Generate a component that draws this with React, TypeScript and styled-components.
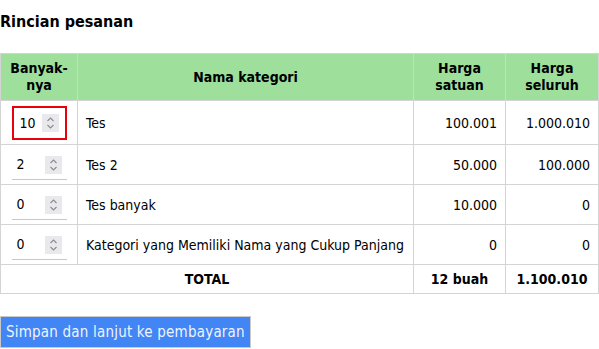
import styled, { createGlobalStyle } from "styled-components";

const GlobalStyle = createGlobalStyle`
  body {
    margin: 0;
    font-family: "DejaVu Sans Condensed", "DejaVu Sans", Verdana, sans-serif;
    font-stretch: condensed;
    color: #000;
    background: #fff;
  }
`;

const Page = styled.div`
  display: flex;
  flex-direction: column;
  align-items: flex-start;
  padding-top: 12px;
`;

const Title = styled.h2`
  margin: 0 0 22px;
  font-size: 16px;
  font-weight: bold;
`;

const Table = styled.table`
  width: 598px;
  table-layout: fixed;
  border-collapse: collapse;
  font-size: 14px;
  margin-bottom: 22px;
`;

const Th = styled.th`
  background: #9ddf9b;
  border: 1px solid #d4d4d4;
  padding: 6px 8px;
  font-weight: bold;
  text-align: center;
  line-height: 17px;
`;

const Td = styled.td<{ align?: "left" | "right" | "center"; bold?: boolean }>`
  border: 1px solid #d4d4d4;
  padding: 5px 8px 4px;
  line-height: ${({ bold }) => (bold ? "19px" : "17px")};
  text-align: ${({ align }) => align || "left"};
  font-weight: ${({ bold }) => (bold ? "bold" : "normal")};
`;

const QtyBox = styled.div<{ active?: boolean }>`
  box-sizing: border-box;
  width: 55px;
  height: ${({ active }) => (active ? "34px" : "30px")};
  margin: 0 auto;
  display: flex;
  align-items: center;
  justify-content: space-between;
  padding: 0 ${({ active }) => (active ? "6px" : "5px")} 0
    ${({ active }) => (active ? "6px" : "5px")};
  border: ${({ active }) => (active ? "2px solid #e8000b" : "none")};
  border-bottom: ${({ active }) =>
    active ? "2px solid #e8000b" : "1px solid #c8c8c8"};
`;

const Spinner = styled.span`
  display: flex;
  align-items: center;
  justify-content: center;
  width: 17px;
  height: 18px;
  background: #e9e9ed;
`;

const Button = styled.button`
  font-family: "DejaVu Sans Condensed", "DejaVu Sans", Verdana, sans-serif;
  font-stretch: condensed;
  font-size: 15px;
  letter-spacing: 0.2px;
  height: 32px;
  padding: 0 5px;
  background: #4285f4;
  color: #eef4ff;
  border: 1px solid #c9c9c9;
  cursor: pointer;
`;

const Chevrons = () => (
  <svg width="9" height="14" viewBox="0 0 9 14" fill="none">
    <path d="M1.5 5 L4.5 2 L7.5 5" stroke="#8b8b8f" strokeWidth="1.1" />
    <path d="M1.5 9 L4.5 12 L7.5 9" stroke="#8b8b8f" strokeWidth="1.1" />
  </svg>
);

const rows = [
  { qty: 10, name: "Tes", price: "100.001", total: "1.000.010" },
  { qty: 2, name: "Tes 2", price: "50.000", total: "100.000" },
  { qty: 0, name: "Tes banyak", price: "10.000", total: "0" },
  {
    qty: 0,
    name: "Kategori yang Memiliki Nama yang Cukup Panjang",
    price: "0",
    total: "0",
  },
];

export default function App() {
  return (
    <Page>
      <GlobalStyle />
      <Title>Rincian pesanan</Title>
      <Table>
        <colgroup>
          <col style={{ width: 77 }} />
          <col style={{ width: 336 }} />
          <col style={{ width: 92 }} />
          <col style={{ width: 93 }} />
        </colgroup>
        <thead>
          <tr>
            <Th>Banyak-nya</Th>
            <Th>Nama kategori</Th>
            <Th>Harga satuan</Th>
            <Th>Harga seluruh</Th>
          </tr>
        </thead>
        <tbody>
          {rows.map((r, i) => (
            <tr key={r.name}>
              <Td>
                <QtyBox active={i === 0}>
                  <span>{r.qty}</span>
                  <Spinner>
                    <Chevrons />
                  </Spinner>
                </QtyBox>
              </Td>
              <Td>{r.name}</Td>
              <Td align="right">{r.price}</Td>
              <Td align="right">{r.total}</Td>
            </tr>
          ))}
          <tr>
            <Td colSpan={2} align="center" bold>
              TOTAL
            </Td>
            <Td align="center" bold>
              12 buah
            </Td>
            <Td align="center" bold>
              1.100.010
            </Td>
          </tr>
        </tbody>
      </Table>
      <Button>Simpan dan lanjut ke pembayaran</Button>
    </Page>
  );
}
